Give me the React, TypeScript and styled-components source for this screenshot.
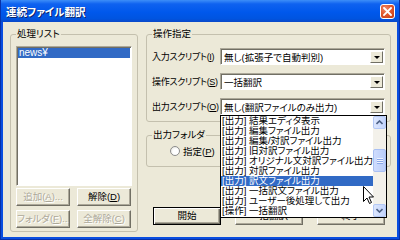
import React from "react";
import styled, { createGlobalStyle } from "styled-components";

const GlobalStyle = createGlobalStyle`
  html, body {
    margin: 0;
    padding: 0;
    background: #ece9d8;
  }
  body {
    font-family: "Liberation Sans", "Noto Sans CJK JP", sans-serif;
    font-size: 9.5px;
    font-feature-settings: "palt";
    color: #000;
  }
  * {
    box-sizing: border-box;
  }
`;

const listItems = [
  "[出力] 結果エディタ表示",
  "[出力] 編集ファイル出力",
  "[出力] 編集/対訳ファイル出力",
  "[出力] 旧対訳ファイル出力",
  "[出力] オリジナル文対訳ファイル出力",
  "[出力] 対訳ファイル出力",
  "[出力] 訳文ファイル出力",
  "[出力] 一括訳文ファイル出力",
  "[出力] ユーザー後処理して出力",
  "[操作] 一括翻訳",
];
const selectedIndex = 6;

const App = () => {
  return (
    <>
      <GlobalStyle />
      <Window>
        <TitleBar>
          <Title>連続ファイル翻訳</Title>
          <CloseButton>
            <svg width="9" height="9" viewBox="0 0 9 9">
              <path d="M1 1 L8 8 M8 1 L1 8" stroke="#fff" strokeWidth="1.8" strokeLinecap="square" />
            </svg>
          </CloseButton>
        </TitleBar>
        <Client>
          <LeftGroup>
            <Legend>処理リスト</Legend>
            <LeftInner>
              <FileList>
                <FileRow $selected>news¥</FileRow>
              </FileList>
              <ButtonGrid>
                <Button disabled>追加(<Key>A</Key>)...</Button>
                <Button>解除(<Key>D</Key>)</Button>
                <Button disabled>フォルダ(<Key>F</Key>)...</Button>
                <Button disabled>全解除(<Key>C</Key>)</Button>
              </ButtonGrid>
            </LeftInner>
          </LeftGroup>

          <RightColumn>
            <OpGroup>
              <Legend>操作指定</Legend>
              <Rows>
                <Row>
                  <RowLabel>入力スクリプト(<Key>I</Key>)</RowLabel>
                  <ComboWrap>
                    <Combo>
                      <ComboText>無し(拡張子で自動判別)</ComboText>
                      <DropButton><Arrow /></DropButton>
                    </Combo>
                  </ComboWrap>
                </Row>
                <Row>
                  <RowLabel>操作スクリプト(<Key>S</Key>)</RowLabel>
                  <ComboWrap>
                    <Combo>
                      <ComboText>一括翻訳</ComboText>
                      <DropButton><Arrow /></DropButton>
                    </Combo>
                  </ComboWrap>
                </Row>
                <Row>
                  <RowLabel>出力スクリプト(<Key>O</Key>)</RowLabel>
                  <ComboWrap>
                    <Combo>
                      <ComboText>無し(翻訳ファイルのみ出力)</ComboText>
                      <DropButton><Arrow /></DropButton>
                    </Combo>
                    <Dropdown>
                      <Items>
                        {listItems.map((item, i) => (
                          <Item key={i} $selected={i === selectedIndex}>{item}</Item>
                        ))}
                      </Items>
                      <ScrollBar>
                        <ScrollButton>
                          <svg width="7" height="5" viewBox="0 0 7 5">
                            <path d="M0.5 4 L3.5 1 L6.5 4" stroke="#4d6185" strokeWidth="1.6" fill="none" />
                          </svg>
                        </ScrollButton>
                        <Track>
                          <Thumb $offset={20}>
                            <Grip />
                            <Grip />
                            <Grip />
                          </Thumb>
                        </Track>
                        <ScrollButton>
                          <svg width="7" height="5" viewBox="0 0 7 5">
                            <path d="M0.5 1 L3.5 4 L6.5 1" stroke="#4d6185" strokeWidth="1.6" fill="none" />
                          </svg>
                        </ScrollButton>
                      </ScrollBar>
                    </Dropdown>
                  </ComboWrap>
                </Row>
              </Rows>
            </OpGroup>

            <FolderGroup>
              <Legend>出力フォルダ</Legend>
              <RadioRow>
                <Radio />
                <span>指定(<Key>P</Key>)</span>
              </RadioRow>
            </FolderGroup>

            <ActionRow>
              <Button $default>開始</Button>
              <Button>一括翻訳</Button>
              <Button>終了</Button>
            </ActionRow>
          </RightColumn>
        </Client>

        <Cursor width="12" height="19" viewBox="0 0 12 19">
          <path d="M0.5 0.5 L0.5 15.5 L4 12 L6.5 17.5 L8.5 16.5 L6 11 L10.5 11 Z" fill="#fff" stroke="#000" strokeWidth="1" />
        </Cursor>
      </Window>
    </>
  );
};

const Window = styled.div`
  position: relative;
  width: 400px;
  height: 240px;
  display: flex;
  flex-direction: column;
  background: #0a4ee0;
  border-left: 1px solid #0831a8;
  border-right: 1px solid #0831a8;
  border-bottom: 1px solid #0831a8;
  overflow: hidden;
`;

const TitleBar = styled.div`
  flex: none;
  height: 22px;
  display: flex;
  align-items: center;
  padding: 0 4px 0 5px;
  background: linear-gradient(#3d8ef8 0%, #0f62f0 18%, #0058ec 55%, #0054e0 85%, #0a48c8 100%);
`;

const Title = styled.span`
  flex: 1;
  color: #fff;
  font-size: 10.5px;
  font-weight: bold;
  text-shadow: 1px 1px 0 #0a246a;
`;

const CloseButton = styled.div`
  width: 15px;
  height: 15px;
  border: 1px solid #fff;
  border-radius: 3px;
  background: radial-gradient(circle at 35% 30%, #f08a6a 0%, #e0582e 45%, #c23a12 100%);
  display: flex;
  align-items: center;
  justify-content: center;
`;

const Client = styled.div`
  flex: 1;
  margin: 0 2px 2px 2px;
  background: #ece9d8;
  display: flex;
  gap: 8px;
  padding: 6px 6px 5px 7px;
`;

const GroupBox = styled.fieldset`
  margin: 0;
  min-width: 0;
  border: 1px solid #c4c0ae;
  border-radius: 3px;
`;

const Legend = styled.legend`
  padding: 0 1px;
  line-height: 12px;
  font-size: 9.5px;
`;

const LeftGroup = styled(GroupBox)`
  width: 128px;
  flex: none;
  padding: 6px 5px 2px 5px;
`;

const LeftInner = styled.div`
  display: flex;
  flex-direction: column;
  height: 100%;
`;

const FileList = styled.div`
  height: 140px;
  background: #fff;
  border: 1px solid;
  border-color: #aca899 #fff #fff #aca899;
  box-shadow: inset 1px 1px 0 #716f64;
  padding: 1px 1px 0 1px;
`;

const FileRow = styled.div<{ $selected?: boolean }>`
  height: 10px;
  line-height: 10px;
  padding-left: 1px;
  font-size: 10px;
  background: ${(p) => (p.$selected ? "#316ac5" : "transparent")};
  color: ${(p) => (p.$selected ? "#fff" : "#000")};
`;

const ButtonGrid = styled.div`
  margin-top: 2px;
  display: grid;
  grid-template-columns: 54px 54px;
  grid-auto-rows: 18px;
  column-gap: 7px;
  row-gap: 4px;
`;

const Button = styled.button<{ $default?: boolean }>`
  height: 18px;
  padding: 0;
  font-family: inherit;
  font-size: 9.5px;
  font-feature-settings: "palt";
  line-height: 12px;
  white-space: nowrap;
  overflow: hidden;
  color: #000;
  background: #ece9d8;
  border: 1px solid;
  border-color: ${(p) => (p.$default ? "#000" : "#fff #716f64 #716f64 #fff")};
  box-shadow: ${(p) =>
    p.$default
      ? "inset 1px 1px 0 #fff, inset -1px -1px 0 #716f64, inset -2px -2px 0 #aca899"
      : "inset -1px -1px 0 #aca899"};
  border-radius: 0;

  &:disabled {
    color: #aca899;
    text-shadow: 1px 1px 0 #fff;
  }
`;

const Key = styled.span`
  text-decoration: underline;
`;

const RightColumn = styled.div`
  flex: 1;
  display: flex;
  flex-direction: column;
`;

const OpGroup = styled(GroupBox)`
  padding: 8px 5px 6px 5px;
  position: relative;
  z-index: 2;
`;

const Rows = styled.div`
  display: flex;
  flex-direction: column;
  gap: 8px;
`;

const Row = styled.div`
  display: flex;
  align-items: center;
  height: 17px;
`;

const RowLabel = styled.span`
  width: 68px;
  flex: none;
  font-size: 9px;
  white-space: nowrap;
  letter-spacing: -0.3px;
`;

const ComboWrap = styled.div`
  position: relative;
  flex: 1;
  height: 17px;
`;

const Combo = styled.div`
  height: 17px;
  display: flex;
  align-items: center;
  background: #fff;
  border: 1px solid;
  border-color: #aca899 #fff #fff #aca899;
  box-shadow: inset 1px 1px 0 #716f64;
  padding: 2px 1px 1px 2px;
`;

const ComboText = styled.span`
  flex: 1;
  padding-left: 1px;
  white-space: nowrap;
  overflow: hidden;
`;

const DropButton = styled.div`
  width: 13px;
  height: 12px;
  flex: none;
  display: flex;
  align-items: center;
  justify-content: center;
  background: #ece9d8;
  border: 1px solid;
  border-color: #fff #716f64 #716f64 #fff;
`;

const Arrow = styled.span`
  width: 0;
  height: 0;
  border-left: 3px solid transparent;
  border-right: 3px solid transparent;
  border-top: 3px solid #000;
`;

const Dropdown = styled.div`
  position: absolute;
  top: 100%;
  left: 0;
  width: 167px;
  height: 103px;
  display: flex;
  background: #fff;
  border: 1px solid #000;
  z-index: 5;
`;

const Items = styled.div`
  flex: 1;
  min-width: 0;
  overflow: hidden;
`;

const Item = styled.div<{ $selected?: boolean }>`
  height: 10px;
  line-height: 10px;
  padding-left: 1px;
  white-space: nowrap;
  background: ${(p) => (p.$selected ? "#316ac5" : "transparent")};
  color: ${(p) => (p.$selected ? "#fff" : "#000")};
`;

const ScrollBar = styled.div`
  width: 13px;
  flex: none;
  display: flex;
  flex-direction: column;
  background: #f3f1ea;
`;

const ScrollButton = styled.div`
  height: 13px;
  flex: none;
  display: flex;
  align-items: center;
  justify-content: center;
  background: linear-gradient(90deg, #dce6fd, #c3d4fc);
  border: 1px solid #b3c8f5;
  border-radius: 2px;
`;

const Track = styled.div`
  flex: 1;
  display: flex;
  flex-direction: column;
`;

const Thumb = styled.div<{ $offset: number }>`
  margin-top: ${(p) => p.$offset}px;
  height: 23px;
  display: flex;
  flex-direction: column;
  align-items: center;
  justify-content: center;
  gap: 1px;
  background: linear-gradient(90deg, #cfdcfd, #b9cdfa);
  border: 1px solid #a9c0f3;
  border-radius: 2px;
`;

const Grip = styled.span`
  width: 6px;
  height: 1px;
  background: #eef3ff;
  box-shadow: 0 1px 0 #8ca8e8;
`;

const FolderGroup = styled(GroupBox)`
  margin-top: 7px;
  padding: 3px 5px 9px 5px;
`;

const RadioRow = styled.label`
  display: flex;
  align-items: center;
  gap: 3px;
  height: 13px;
  padding-left: 18px;
`;

const Radio = styled.span`
  width: 10px;
  height: 10px;
  border-radius: 50%;
  border: 1px solid #8c8c8c;
  background: radial-gradient(circle at 60% 60%, #fff 40%, #dcdcd4 100%);
`;

const ActionRow = styled.div`
  margin-top: auto;
  margin-bottom: 7px;
  padding: 0 6px 0 7px;
  display: flex;
  justify-content: space-between;

  & > button {
    width: 68px;
  }
`;

const Cursor = styled.svg`
  position: absolute;
  left: 362px;
  top: 186px;
  z-index: 10;
`;

export default App;
